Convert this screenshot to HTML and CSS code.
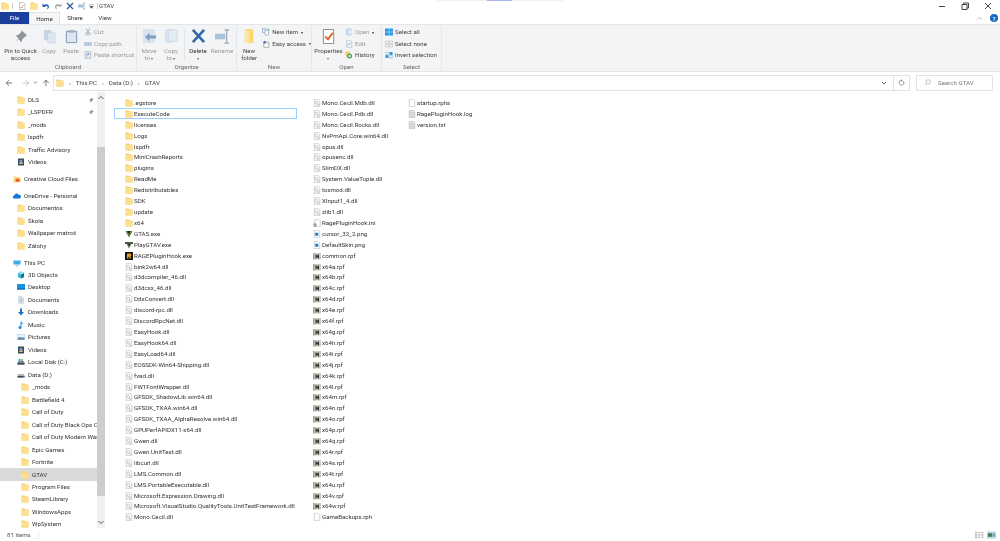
FILE: index.html
```html
<!DOCTYPE html>
<html lang="en">
<head>
<meta charset="utf-8">
<title>GTAV</title>
<link rel="stylesheet" href="styles.css">
</head>
<body>
<svg class="sprite" aria-hidden="true">
  <symbol id="folder" viewBox="0 0 16 16"><path d="M1 1h6l2 2h6v12H1z" fill="#f6cf6b"/><path d="M1 4h14v11H1z" fill="#fde08f"/></symbol>
  <symbol id="dll" viewBox="0 0 16 16"><path d="M2.500 .5h8l3 3v12h-11z" fill="#fff" stroke="#a5a5a5"/><circle cx="7" cy="7" r="2.600" fill="none" stroke="#a9b4be" stroke-width="1.400"/><circle cx="10" cy="11.500" r="1.800" fill="none" stroke="#a9b4be" stroke-width="1.200"/><path d="M4.500 12h2" stroke="#c3ccd4"/></symbol>
  <symbol id="page" viewBox="0 0 16 16"><path d="M2.500 .5h8l3 3v12h-11z" fill="#fff" stroke="#a5a5a5"/></symbol>
  <symbol id="log" viewBox="0 0 16 16"><path d="M2.500 .5h8l3 3v12h-11z" fill="#e4e4e4" stroke="#a5a5a5"/><path d="M4 5h8M4 7.500h8M4 10h8M4 12.500h8" stroke="#c6c6c6"/></symbol>
  <symbol id="ini" viewBox="0 0 16 16"><path d="M3.500 .5h8l3 3v12h-11z" fill="#fff" stroke="#a5a5a5"/><circle cx="4" cy="12" r="3.500" fill="#888"/><circle cx="4" cy="12" r="1.200" fill="#fff"/></symbol>
  <symbol id="png" viewBox="0 0 16 16"><path d="M2.500 .5h8l3 3v12h-11z" fill="#fff" stroke="#a5a5a5"/><path d="M4.500 5.500h6v6h-6z" fill="#1a78d0"/></symbol>
  <symbol id="rpf" viewBox="0 0 16 16"><path d="M0 2h16v13H0z" fill="#cfcabb"/><path d="M0 2h3v13H0z" fill="#a9a698"/><path d="M5 5h2l1.500 3L10 5h2v8h-2V9l-1.500 3L7 9v4H5z" fill="#2f2f2c"/></symbol>
  <symbol id="gta5" viewBox="0 0 16 16"><path d="M1 2h14L8 15z" fill="#5d7a3a"/><path d="M5 2h6L8 9z" fill="#23301c"/></symbol>
  <symbol id="play" viewBox="0 0 16 16"><path d="M0 2h16v4H0z" fill="#4a5a4a"/><path d="M3 6h10l-5 9z" fill="#6c7c5c"/><path d="M6 6h4l-2 5z" fill="#222"/></symbol>
  <symbol id="rage" viewBox="0 0 16 16"><rect width="16" height="16" rx="1" fill="#15120c"/><path d="M4 3h7l2 3-2 3 2 4h-3L8 9H7v4H4z" fill="#e0a020"/></symbol>
  <symbol id="pin" viewBox="0 0 16 16"><path d="M9 1l6 6-2 1-3 3-1 3-3-3-4 4 4-5-3-3 3-1 3-3z" fill="#8f9499"/></symbol>
  <symbol id="video" viewBox="0 0 16 16"><path d="M2 1h12v14H2z" fill="#3f4a58"/><path d="M5 4h6v8H5z" fill="#6f9bd8"/><path d="M5 9h6v3H5z" fill="#e5b75a"/></symbol>
  <symbol id="cc" viewBox="0 0 16 16"><path d="M1 3h6l1 1h7v11H1z" fill="#fbd67a"/><path d="M6 13a3 3 0 0 1 1-5 3 3 0 0 1 5 1 2 2 0 0 1 0 4z" fill="#e8532b"/></symbol>
  <symbol id="cloud" viewBox="0 0 16 16"><path d="M3 13a3 3 0 0 1-.500-6A4.500 4.500 0 0 1 11 5.500 3.800 3.800 0 0 1 13 13z" fill="#0f78d4"/></symbol>
  <symbol id="pc" viewBox="0 0 16 16"><path d="M1 2h14v9H1z" fill="#3fa7ea"/><path d="M1 2h14v2H1z" fill="#9dd5f5"/><path d="M5 13h6v1.500H5z" fill="#8a9aa8"/><path d="M7 11h2v2H7z" fill="#b8c4ce"/></symbol>
  <symbol id="cube" viewBox="0 0 16 16"><path d="M8 1l6 3v8l-6 3-6-3V4z" fill="#3ab2d8"/><path d="M8 7l6-3v8l-6 3z" fill="#12749e"/><path d="M2 4l6-3 6 3-6 3z" fill="#97e0f3"/></symbol>
  <symbol id="desk" viewBox="0 0 16 16"><path d="M0 2h16v11H0z" fill="#1a8fe3"/><path d="M0 11h16v2H0z" fill="#0c62aa"/></symbol>
  <symbol id="docs" viewBox="0 0 16 16"><path d="M3 1h7l3 3v11H3z" fill="#dfe6ec" stroke="#a8b4bf" stroke-width=".7"/><path d="M5 6h6M5 8.500h6M5 11h6" stroke="#70a7d6"/></symbol>
  <symbol id="down" viewBox="0 0 16 16"><path d="M6 1h4v7h4l-6 7-6-7h4z" fill="#1a73c9"/></symbol>
  <symbol id="music" viewBox="0 0 16 16"><path d="M7 1h2c0 3 4 3 4 7-1-2-2-2.500-4-3v8a3 3 0 1 1-2-2.800z" fill="#1f8fe0"/></symbol>
  <symbol id="pics" viewBox="0 0 16 16"><path d="M0 2h16v12H0z" fill="#b9c9d6"/><path d="M1 3h14v5H1z" fill="#eaf2f8"/><path d="M1 13l5-5 4 3 2-2 3 2v2z" fill="#4d7fa6"/></symbol>
  <symbol id="disk" viewBox="0 0 16 16"><path d="M1 9l2-3h10l2 3v4H1z" fill="#7b8790"/><path d="M1 10h14v3H1z" fill="#3d4750"/><path d="M3 2h4v4H3z" fill="#37a3e6"/><path d="M8 2h4v4H8z" fill="#79c857"/></symbol>
  <symbol id="drive" viewBox="0 0 16 16"><path d="M2 6h12l1 3v4H1V9z" fill="#adb4ba"/><path d="M1 10h14v3H1z" fill="#3d4750"/><path d="M12 11h2v1h-2z" fill="#79c857"/></symbol>
</svg>
<div class="window">
  <span class="topstrip"><span class="topstrip-on"></span></span>
  <header class="titlebar">
    <svg class="qa qa-first" viewBox="0 0 16 16"><use href="#folder"/></svg>
    <i class="qa-sep"></i>
    <svg class="qa" viewBox="0 0 16 16"><path d="M3 1h8l3 3v11H3z" fill="#fff" stroke="#888"/><path d="M5 10l2 2 4-5" stroke="#e0602a" fill="none" stroke-width="1.500"/></svg>
    <svg class="qa" viewBox="0 0 16 16"><use href="#folder"/></svg>
    <svg class="qa" viewBox="0 0 16 16"><path d="M4 6a6 6 0 0 1 10 3c0 3-2 5-5 6 2-2 3-4 2-6a4 4 0 0 0-5-1l2 2H1V3l3 3z" fill="#1f5fa8"/></svg>
    <svg class="qa" viewBox="0 0 16 16"><path d="M12 6a6 6 0 0 0-10 3c0 3 2 5 5 6-2-2-3-4-2-6a4 4 0 0 1 5-1L8 9h7V3l-3 3z" fill="#98a2ad"/></svg>
    <svg class="qa" viewBox="0 0 16 16"><path d="M2 2l12 12M14 2L2 14" stroke="#2c5f96" stroke-width="2.500"/></svg>
    <svg class="qa" viewBox="0 0 16 16"><path d="M0 5h11v6H0z" fill="#a7c0dc"/><path d="M12 2v12M10 2h4M10 14h4" stroke="#7e8b97"/></svg>
    <svg class="qa-caret" viewBox="0 0 8 8"><path d="M0 1h8M1 3.500h6L4 7z" fill="#444" stroke="#444" stroke-width=".5"/></svg>
    <i class="qa-sep qa-sep-b"></i>
    <span class="title">GTAV</span>
    <span class="winbtns">
      <svg class="winbtn" viewBox="0 0 10 10"><path d="M2 5.500h6" stroke="#444"/></svg>
      <svg class="winbtn" viewBox="0 0 10 10"><path d="M2 3.500h5v5H2zM3.500 3.500V2h5v5H7" fill="none" stroke="#444"/></svg>
      <svg class="winbtn" viewBox="0 0 10 10"><path d="M2 2l6 6M8 2l-6 6" stroke="#444"/></svg>
    </span>
  </header>
  <nav class="tabs">
    <span class="tab tab-file">File</span>
    <span class="tab tab-on">Home</span>
    <span class="tab">Share</span>
    <span class="tab">View</span>
    <svg class="collapse" viewBox="0 0 8 8"><path d="M1 5.500l3-3 3 3" fill="none" stroke="#b5b5b5"/></svg>
    <span class="help">?</span>
  </nav>
  <section class="ribbon">
    <div class="group g-clip">
      <div class="g-body">
        <div class="big big-pin">
          <svg class="big-ic" viewBox="0 0 16 16"><use href="#pin"/></svg>
          <span>Pin to Quick<br>access</span>
        </div>
        <div class="big big-off">
          <svg class="big-ic" viewBox="0 0 16 16"><path d="M2 1h8v11H2z" fill="#c6d5e6"/><path d="M6 4h8v11H6z" fill="#dce6f0" stroke="#bfcbd8" stroke-width=".5"/></svg>
          <span>Copy</span>
        </div>
        <div class="big big-off">
          <svg class="big-ic" viewBox="0 0 16 16"><path d="M2.500 2.500h11v12h-11z" fill="#dce6f0" stroke="#7b93ad"/><path d="M5 1h6v3H5z" fill="#a5b4c4"/></svg>
          <span>Paste</span>
        </div>
        <div class="smalls smalls-off">
          <div class="small"><svg class="sm-ic" viewBox="0 0 16 16"><path d="M4 1l6 9M12 1L6 10" stroke="#8e99a5" stroke-width="1.500"/><circle cx="5" cy="12" r="2.500" fill="none" stroke="#8e99a5"/><circle cx="11" cy="12" r="2.500" fill="none" stroke="#8e99a5"/></svg>Cut</div>
          <div class="small"><svg class="sm-ic" viewBox="0 0 16 16"><path d="M0 4h16v8H0z" fill="#c0d0e0"/><path d="M2 8h12" stroke="#7d93a8" stroke-dasharray="2 1"/></svg>Copy path</div>
          <div class="small"><svg class="sm-ic" viewBox="0 0 16 16"><path d="M2.500 1.500h11v13h-11z" fill="#e6ecf2" stroke="#8096ad"/><path d="M6 11V6h4M8 4.500L10 6 8 7.500" fill="none" stroke="#44689a"/></svg>Paste shortcut</div>
        </div>
      </div>
      <div class="g-label">Clipboard</div>
    </div>
    <div class="group g-org">
      <div class="g-body">
        <div class="big big-off">
          <svg class="big-ic" viewBox="0 0 16 16"><path d="M1 0h13v15H1z" fill="#d9e3ef"/><path d="M15 7v3H8v3L3 8.500 8 4v3z" fill="#7ea0c4"/></svg>
          <span>Move<br>to <em>▾</em></span>
        </div>
        <div class="big big-off">
          <svg class="big-ic" viewBox="0 0 16 16"><path d="M1 0h9v15H1z" fill="#d9e3ef"/><path d="M5 1h9v12H5z" fill="#e4ebf3" stroke="#bfcbd8" stroke-width=".5"/></svg>
          <span>Copy<br>to <em>▾</em></span>
        </div>
        <i class="r-sep"></i>
        <div class="big big-del">
          <svg class="big-ic" viewBox="0 0 16 16"><path d="M2 1l12 13M14 1L2 14" stroke="#2e6aa7" stroke-width="2.800"/></svg>
          <span>Delete<br><em>▾</em></span>
        </div>
        <div class="big big-off">
          <svg class="big-ic" viewBox="0 0 16 16"><path d="M0 5h11v6H0z" fill="#a8c3de"/><path d="M12.500 1v14M10 1h5M10 15h5" stroke="#8492a0"/></svg>
          <span>Rename</span>
        </div>
      </div>
      <div class="g-label">Organize</div>
    </div>
    <div class="group g-new">
      <div class="g-body">
        <div class="big">
          <svg class="big-ic" viewBox="0 0 16 16"><path d="M3 0h7l2 1v14H3z" fill="#f9d671"/><path d="M3 0l5 2v14l-5-2z" fill="#fbe5a2"/></svg>
          <span>New<br>folder</span>
        </div>
        <div class="smalls">
          <div class="small"><svg class="sm-ic" viewBox="0 0 16 16"><path d="M1 1h7v8H1z" fill="#dfe9f2" stroke="#6b8bab"/><path d="M6 5h7v9H6z" fill="#fff" stroke="#6b8bab"/><path d="M13 1v4M11 3h4" stroke="#3c9c48"/></svg>New item <em>▾</em></div>
          <div class="small"><svg class="sm-ic" viewBox="0 0 16 16"><path d="M3.500 4.500h10v10h-10z" fill="#fff" stroke="#666"/><path d="M7 1L2 5l5 3z" fill="#1f5fa8"/></svg>Easy access <em>▾</em></div>
        </div>
      </div>
      <div class="g-label">New</div>
    </div>
    <div class="group g-open">
      <div class="g-body">
        <div class="big">
          <svg class="big-ic" viewBox="0 0 16 16"><path d="M2.500 .5h11v15h-11z" fill="#fff" stroke="#888"/><path d="M4.500 8l3 3 5-7" fill="none" stroke="#e2622a" stroke-width="2"/></svg>
          <span>Properties<br><em>▾</em></span>
        </div>
        <div class="smalls">
          <div class="small small-off"><svg class="sm-ic" viewBox="0 0 16 16"><path d="M2 1h11v14H2z" fill="#c6d5e6"/><path d="M8 5h3v6H8z" fill="#fff"/></svg>Open <em>▾</em></div>
          <div class="small small-off"><svg class="sm-ic" viewBox="0 0 16 16"><path d="M3.500 .5h7l3 3v12h-10z" fill="#eef3f8" stroke="#93a9c0"/><path d="M5 12l6-7" stroke="#7d9cc0" stroke-width="1.500"/></svg>Edit</div>
          <div class="small"><svg class="sm-ic" viewBox="0 0 16 16"><path d="M1 1h9v10H1z" fill="#f5cf68"/><circle cx="9" cy="10" r="5" fill="#3f9f45"/><circle cx="9" cy="10" r="2.500" fill="#e5e5e5"/></svg>History</div>
        </div>
      </div>
      <div class="g-label">Open</div>
    </div>
    <div class="group g-sel">
      <div class="g-body">
        <div class="smalls smalls-sel">
          <div class="small"><svg class="sm-ic" viewBox="0 0 16 16"><path d="M0 1h16v14H0z" fill="#2d9be8"/><path d="M8 1v14M0 8h16" stroke="#cfe8fa"/></svg>Select all</div>
          <div class="small"><svg class="sm-ic" viewBox="0 0 16 16"><path d="M1 2h6v5H1zM9 2h6v5H9zM1 9h6v5H1zM9 9h6v5H9z" fill="#f2f2f2" stroke="#b5b5b5"/></svg>Select none</div>
          <div class="small"><svg class="sm-ic" viewBox="0 0 16 16"><path d="M1 8h6v6H1zM9 2h6v6H9z" fill="#2d9be8"/><path d="M1.500 2.500h6v5h-6zM9.500 9.500h5v5h-5z" fill="#f2f2f2" stroke="#7fa9c9"/></svg>Invert selection</div>
        </div>
      </div>
      <div class="g-label">Select</div>
    </div>
    <div class="ribbon-rest"></div>
  </section>
  <div class="navbar">
    <svg class="nav-ic" viewBox="0 0 10 10"><path d="M9 5H1.500M5 1.500L1.500 5 5 8.500" fill="none" stroke="#555"/></svg>
    <svg class="nav-ic nav-off" viewBox="0 0 10 10"><path d="M1 5h7.500M5 1.500L8.500 5 5 8.500" fill="none" stroke="#bbb"/></svg>
    <svg class="nav-caret" viewBox="0 0 6 6"><path d="M1 2l2 2 2-2" fill="none" stroke="#777"/></svg>
    <svg class="nav-ic nav-up" viewBox="0 0 10 10"><path d="M5 9V1.500M1.500 5L5 1.500 8.500 5" fill="none" stroke="#555"/></svg>
    <div class="address">
      <svg class="addr-folder" viewBox="0 0 16 16"><use href="#folder"/></svg>
      <span class="crumb-sep">›</span><span>This PC</span><span class="crumb-sep">›</span><span>Data (D:)</span><span class="crumb-sep">›</span><span>GTAV</span>
      <svg class="addr-caret" viewBox="0 0 6 6"><path d="M1 2l2 2 2-2" fill="none" stroke="#666"/></svg>
      <span class="addr-refresh"><svg viewBox="0 0 10 10"><path d="M7.500 3a3.400 3.400 0 1 1-2.500-1" fill="none" stroke="#666"/><path d="M4.500 .5v3l2-1.500z" fill="#666"/></svg></span>
    </div>
    <div class="search">
      <svg class="search-ic" viewBox="0 0 10 10"><circle cx="6" cy="4" r="3" fill="none" stroke="#aaa"/><path d="M4 6.500L1 9" stroke="#aaa"/></svg>
      <span>Search GTAV</span>
    </div>
  </div>
  <main class="main">
    <aside class="sidebar">
      <div class="tree">
        <div class="node l1"><svg class="ic"><use href="#folder"/></svg><span>DLS</span><svg class="tree-pin"><use href="#pin"/></svg></div>
        <div class="node l1"><svg class="ic"><use href="#folder"/></svg><span>_LSPDFR</span><svg class="tree-pin"><use href="#pin"/></svg></div>
        <div class="node l1"><svg class="ic"><use href="#folder"/></svg><span>_mods</span></div>
        <div class="node l1"><svg class="ic"><use href="#folder"/></svg><span>lspdfr</span></div>
        <div class="node l1"><svg class="ic"><use href="#folder"/></svg><span>Traffic Advisory</span></div>
        <div class="node l1"><svg class="ic"><use href="#video"/></svg><span>Videos</span></div>
        <div class="node l0 gap"><svg class="ic"><use href="#cc"/></svg><span>Creative Cloud Files</span></div>
        <div class="node l0 gap"><svg class="ic"><use href="#cloud"/></svg><span>OneDrive - Personal</span></div>
        <div class="node l1"><svg class="ic"><use href="#folder"/></svg><span>Documentos</span></div>
        <div class="node l1"><svg class="ic"><use href="#folder"/></svg><span>Škola</span></div>
        <div class="node l1"><svg class="ic"><use href="#folder"/></svg><span>Wallpaper matroš</span></div>
        <div class="node l1"><svg class="ic"><use href="#folder"/></svg><span>Zálohy</span></div>
        <div class="node l0 gap"><svg class="ic"><use href="#pc"/></svg><span>This PC</span></div>
        <div class="node l1"><svg class="ic"><use href="#cube"/></svg><span>3D Objects</span></div>
        <div class="node l1"><svg class="ic"><use href="#desk"/></svg><span>Desktop</span></div>
        <div class="node l1"><svg class="ic"><use href="#docs"/></svg><span>Documents</span></div>
        <div class="node l1"><svg class="ic"><use href="#down"/></svg><span>Downloads</span></div>
        <div class="node l1"><svg class="ic"><use href="#music"/></svg><span>Music</span></div>
        <div class="node l1"><svg class="ic"><use href="#pics"/></svg><span>Pictures</span></div>
        <div class="node l1"><svg class="ic"><use href="#video"/></svg><span>Videos</span></div>
        <div class="node l1"><svg class="ic"><use href="#disk"/></svg><span>Local Disk (C:)</span></div>
        <div class="node l1"><svg class="ic"><use href="#drive"/></svg><span>Data (D:)</span></div>
        <div class="node l2"><svg class="ic"><use href="#folder"/></svg><span>_mods</span></div>
        <div class="node l2"><svg class="ic"><use href="#folder"/></svg><span>Battlefield 4</span></div>
        <div class="node l2"><svg class="ic"><use href="#folder"/></svg><span>Call of Duty</span></div>
        <div class="node l2"><svg class="ic"><use href="#folder"/></svg><span>Call of Duty Black Ops Cold War</span></div>
        <div class="node l2"><svg class="ic"><use href="#folder"/></svg><span>Call of Duty Modern Warfare</span></div>
        <div class="node l2"><svg class="ic"><use href="#folder"/></svg><span>Epic Games</span></div>
        <div class="node l2"><svg class="ic"><use href="#folder"/></svg><span>Fortnite</span></div>
        <div class="node l2 node-on"><svg class="ic"><use href="#folder"/></svg><span>GTAV</span></div>
        <div class="node l2"><svg class="ic"><use href="#folder"/></svg><span>Program Files</span></div>
        <div class="node l2"><svg class="ic"><use href="#folder"/></svg><span>SteamLibrary</span></div>
        <div class="node l2"><svg class="ic"><use href="#folder"/></svg><span>WindowsApps</span></div>
        <div class="node l2"><svg class="ic"><use href="#folder"/></svg><span>WpSystem</span></div>
      </div>
      <div class="scrollbar">
        <svg class="sb-arrow" viewBox="0 0 8 8"><path d="M1.500 5L4 2.500 6.500 5" fill="none" stroke="#555"/></svg>
        <div class="sb-thumb"></div>
        <svg class="sb-arrow" viewBox="0 0 8 8"><path d="M1.500 3L4 5.500 6.500 3" fill="none" stroke="#555"/></svg>
      </div>
    </aside>
    <section class="files">
      <div class="col col-a">
        <div class="file"><svg class="ic"><use href="#folder"/></svg>.egstore</div>
        <div class="file file-focus"><svg class="ic"><use href="#folder"/></svg>ExecuteCode</div>
        <div class="file"><svg class="ic"><use href="#folder"/></svg>licenses</div>
        <div class="file"><svg class="ic"><use href="#folder"/></svg>Logs</div>
        <div class="file"><svg class="ic"><use href="#folder"/></svg>lspdfr</div>
        <div class="file"><svg class="ic"><use href="#folder"/></svg>MiniCrashReports</div>
        <div class="file"><svg class="ic"><use href="#folder"/></svg>plugins</div>
        <div class="file"><svg class="ic"><use href="#folder"/></svg>ReadMe</div>
        <div class="file"><svg class="ic"><use href="#folder"/></svg>Redistributables</div>
        <div class="file"><svg class="ic"><use href="#folder"/></svg>SDK</div>
        <div class="file"><svg class="ic"><use href="#folder"/></svg>update</div>
        <div class="file"><svg class="ic"><use href="#folder"/></svg>x64</div>
        <div class="file"><svg class="ic"><use href="#gta5"/></svg>GTA5.exe</div>
        <div class="file"><svg class="ic"><use href="#play"/></svg>PlayGTAV.exe</div>
        <div class="file"><svg class="ic"><use href="#rage"/></svg>RAGEPluginHook.exe</div>
        <div class="file"><svg class="ic"><use href="#dll"/></svg>bink2w64.dll</div>
        <div class="file"><svg class="ic"><use href="#dll"/></svg>d3dcompiler_46.dll</div>
        <div class="file"><svg class="ic"><use href="#dll"/></svg>d3dcsx_46.dll</div>
        <div class="file"><svg class="ic"><use href="#dll"/></svg>DdsConvert.dll</div>
        <div class="file"><svg class="ic"><use href="#dll"/></svg>discord-rpc.dll</div>
        <div class="file"><svg class="ic"><use href="#dll"/></svg>DiscordRpcNet.dll</div>
        <div class="file"><svg class="ic"><use href="#dll"/></svg>EasyHook.dll</div>
        <div class="file"><svg class="ic"><use href="#dll"/></svg>EasyHook64.dll</div>
        <div class="file"><svg class="ic"><use href="#dll"/></svg>EasyLoad64.dll</div>
        <div class="file"><svg class="ic"><use href="#dll"/></svg>EOSSDK-Win64-Shipping.dll</div>
        <div class="file"><svg class="ic"><use href="#dll"/></svg>fvad.dll</div>
        <div class="file"><svg class="ic"><use href="#dll"/></svg>FW1FontWrapper.dll</div>
        <div class="file"><svg class="ic"><use href="#dll"/></svg>GFSDK_ShadowLib.win64.dll</div>
        <div class="file"><svg class="ic"><use href="#dll"/></svg>GFSDK_TXAA.win64.dll</div>
        <div class="file"><svg class="ic"><use href="#dll"/></svg>GFSDK_TXAA_AlphaResolve.win64.dll</div>
        <div class="file"><svg class="ic"><use href="#dll"/></svg>GPUPerfAPIDX11-x64.dll</div>
        <div class="file"><svg class="ic"><use href="#dll"/></svg>Gwen.dll</div>
        <div class="file"><svg class="ic"><use href="#dll"/></svg>Gwen.UnitTest.dll</div>
        <div class="file"><svg class="ic"><use href="#dll"/></svg>libcurl.dll</div>
        <div class="file"><svg class="ic"><use href="#dll"/></svg>LMS.Common.dll</div>
        <div class="file"><svg class="ic"><use href="#dll"/></svg>LMS.PortableExecutable.dll</div>
        <div class="file"><svg class="ic"><use href="#dll"/></svg>Microsoft.Expression.Drawing.dll</div>
        <div class="file"><svg class="ic"><use href="#dll"/></svg>Microsoft.VisualStudio.QualityTools.UnitTestFramework.dll</div>
        <div class="file"><svg class="ic"><use href="#dll"/></svg>Mono.Cecil.dll</div>
      </div>
      <div class="col col-b">
        <div class="file"><svg class="ic"><use href="#dll"/></svg>Mono.Cecil.Mdb.dll</div>
        <div class="file"><svg class="ic"><use href="#dll"/></svg>Mono.Cecil.Pdb.dll</div>
        <div class="file"><svg class="ic"><use href="#dll"/></svg>Mono.Cecil.Rocks.dll</div>
        <div class="file"><svg class="ic"><use href="#dll"/></svg>NvPmApi.Core.win64.dll</div>
        <div class="file"><svg class="ic"><use href="#dll"/></svg>opus.dll</div>
        <div class="file"><svg class="ic"><use href="#dll"/></svg>opusenc.dll</div>
        <div class="file"><svg class="ic"><use href="#dll"/></svg>SlimDX.dll</div>
        <div class="file"><svg class="ic"><use href="#dll"/></svg>System.ValueTuple.dll</div>
        <div class="file"><svg class="ic"><use href="#dll"/></svg>toxmod.dll</div>
        <div class="file"><svg class="ic"><use href="#dll"/></svg>XInput1_4.dll</div>
        <div class="file"><svg class="ic"><use href="#dll"/></svg>zlib1.dll</div>
        <div class="file"><svg class="ic"><use href="#ini"/></svg>RagePluginHook.ini</div>
        <div class="file"><svg class="ic"><use href="#png"/></svg>cursor_32_2.png</div>
        <div class="file"><svg class="ic"><use href="#png"/></svg>DefaultSkin.png</div>
        <div class="file"><svg class="ic"><use href="#rpf"/></svg>common.rpf</div>
        <div class="file"><svg class="ic"><use href="#rpf"/></svg>x64a.rpf</div>
        <div class="file"><svg class="ic"><use href="#rpf"/></svg>x64b.rpf</div>
        <div class="file"><svg class="ic"><use href="#rpf"/></svg>x64c.rpf</div>
        <div class="file"><svg class="ic"><use href="#rpf"/></svg>x64d.rpf</div>
        <div class="file"><svg class="ic"><use href="#rpf"/></svg>x64e.rpf</div>
        <div class="file"><svg class="ic"><use href="#rpf"/></svg>x64f.rpf</div>
        <div class="file"><svg class="ic"><use href="#rpf"/></svg>x64g.rpf</div>
        <div class="file"><svg class="ic"><use href="#rpf"/></svg>x64h.rpf</div>
        <div class="file"><svg class="ic"><use href="#rpf"/></svg>x64i.rpf</div>
        <div class="file"><svg class="ic"><use href="#rpf"/></svg>x64j.rpf</div>
        <div class="file"><svg class="ic"><use href="#rpf"/></svg>x64k.rpf</div>
        <div class="file"><svg class="ic"><use href="#rpf"/></svg>x64l.rpf</div>
        <div class="file"><svg class="ic"><use href="#rpf"/></svg>x64m.rpf</div>
        <div class="file"><svg class="ic"><use href="#rpf"/></svg>x64n.rpf</div>
        <div class="file"><svg class="ic"><use href="#rpf"/></svg>x64o.rpf</div>
        <div class="file"><svg class="ic"><use href="#rpf"/></svg>x64p.rpf</div>
        <div class="file"><svg class="ic"><use href="#rpf"/></svg>x64q.rpf</div>
        <div class="file"><svg class="ic"><use href="#rpf"/></svg>x64r.rpf</div>
        <div class="file"><svg class="ic"><use href="#rpf"/></svg>x64s.rpf</div>
        <div class="file"><svg class="ic"><use href="#rpf"/></svg>x64t.rpf</div>
        <div class="file"><svg class="ic"><use href="#rpf"/></svg>x64u.rpf</div>
        <div class="file"><svg class="ic"><use href="#rpf"/></svg>x64v.rpf</div>
        <div class="file"><svg class="ic"><use href="#rpf"/></svg>x64w.rpf</div>
        <div class="file"><svg class="ic"><use href="#page"/></svg>GameBackups.rph</div>
      </div>
      <div class="col col-c">
        <div class="file"><svg class="ic"><use href="#page"/></svg>startup.rphs</div>
        <div class="file"><svg class="ic"><use href="#log"/></svg>RagePluginHook.log</div>
        <div class="file"><svg class="ic"><use href="#log"/></svg>version.txt</div>
      </div>
    </section>
  </main>
  <footer class="status">
    <span class="count">81 items</span>
    <i class="status-sep"></i>
    <span class="views">
      <svg class="view" viewBox="0 0 10 8"><path d="M0 0h2.500v8H0z" fill="#ccc"/><path d="M3.500 1.500h2.500M7 1.500h2.500M3.500 4h2.500M7 4h2.500M3.500 6.500h2.500M7 6.500h2.500" stroke="#999"/></svg>
      <svg class="view view-on" viewBox="0 0 10 8"><path d="M0 0h10v8H0z" fill="#bcdcf4"/><path d="M1 2h5v4H1z" fill="#497a5c"/><path d="M7 3h2M7 5h2" stroke="#555"/></svg>
    </span>
  </footer>
</div>
</body>
</html>
```
FILE: styles.css
```css
* { box-sizing: border-box; }
html, body { margin: 0; padding: 0; height: 100%; background: #fff; overflow: hidden; }
body { font-family: Roboto, "Liberation Sans", sans-serif; font-size: 6.15px; color: #333; }
svg { display: block; flex: none; }
em { font-style: normal; font-size: 4px; color: #666; }
.sprite { width: 0; height: 0; position: absolute; }
.window { display: flex; flex-direction: column; width: 1000px; height: 541px; position: relative; filter: blur(.3px); }
.topstrip { position: absolute; left: 437px; top: 0; width: 126px; height: 1px; background: #f0f0f0; }
.topstrip-on { display: block; margin-left: 50px; width: 25px; height: 1px; background: #a9b5ea; }

.titlebar { height: 12px; display: flex; align-items: center; padding-left: 1px; flex: none; }
.qa { width: 8px; height: 8px; margin-right: 4px; }
.qa-first { margin-right: 3px; }
.qa-sep { width: 1px; height: 6px; background: #ccc; margin-right: 5px; }
.qa-caret { width: 5px; height: 5px; margin-left: -1px; }
.qa-sep-b { margin-left: 3px; margin-right: 1px; }
.title { color: #444; }
.winbtns { margin-left: auto; display: flex; gap: 13px; padding-right: 7px; }
.winbtn { width: 10px; height: 10px; }

.tabs { height: 12px; display: flex; align-items: stretch; flex: none; position: relative; }
.tab { width: 30px; display: flex; align-items: center; justify-content: center; }
.tab-file { width: 29px; background: #1c3f9e; color: #fff; }
.tab-on { width: 31px; background: #f5f6f7; border: 1px solid #e2e3e4; border-bottom: 0; }
.collapse { width: 7px; height: 7px; margin-left: auto; align-self: center; margin-right: 7px; }
.help { width: 8px; height: 8px; border-radius: 50%; background: #0f6cc4; color: #fff; font-size: 6px; font-weight: 700; display: flex; align-items: center; justify-content: center; align-self: center; margin-right: 2px; }

.ribbon { height: 48px; background: #f3f4f6; border-top: 1px solid #e5e6e7; border-bottom: 1px solid #e3e4e5; display: flex; flex: none; color: #444; }
.group { display: flex; flex-direction: column; border-right: 1px solid #e6e7e8; }
.g-clip { width: 137px; }
.g-org { width: 100px; }
.g-new { width: 75px; }
.g-open { width: 70px; }
.g-sel { width: 60px; }
.ribbon-rest { flex: 1; }
.g-body { flex: 1; display: flex; padding-top: 4px; min-height: 0; }
.g-label { height: 9px; line-height: 10px; text-align: center; color: #666; flex: none; }
.big { display: flex; flex-direction: column; align-items: center; text-align: center; line-height: 7px; padding: 0 3px; }
.big span { margin-top: 4px; }
.big-ic { width: 15px; height: 15px; }
.big-off { color: #999; }
.big-pin { width: 37px; margin-left: 2px; padding: 0; }
.big-off, .big-del { width: 22px; padding: 0; }
.g-clip .big-off { width: 22px; }
.g-clip .big-pin + .big-off { margin-left: -1px; }
.g-org .g-body { padding-left: 1px; }
.big-del { width: 26px; color: #333; }
.r-sep { width: 1px; height: 32px; background: #e2e3e4; margin: 0 0 0 2px; }
.smalls { display: flex; flex-direction: column; gap: 0; padding-left: 3px; white-space: nowrap; margin-top: -2.500px; }
.small { display: flex; align-items: center; gap: 2px; height: 11.500px; }
.small em { margin-left: 1px; color: #333; }
.sm-ic { width: 8px; height: 8px; }
.smalls-off, .small-off { color: #999; }
.smalls-off { margin-left: -1px; }
.g-new .big { width: 29px; padding: 0; margin-left: -1px; }
.g-new .smalls { padding-left: 0; }
.g-open .g-body { padding-left: 2px; }
.g-open .big { width: 29px; padding: 0; }
.g-open .smalls { padding-left: 2px; }
.g-sel .smalls { padding-left: 3px; }

.navbar { height: 20px; display: flex; align-items: center; flex: none; padding: 1px 7px 0 5px; }
.nav-ic { width: 8px; height: 8px; margin-right: 9px; }
.nav-off { margin-right: 3px; }
.nav-caret { width: 5px; height: 5px; margin-right: 4px; }
.nav-up { margin-right: 3px; }
.address { flex: 1; height: 16px; border: 1px solid #e3e3e3; display: flex; align-items: center; padding-left: 2px; gap: 5px; color: #444; }
.addr-folder { width: 8px; height: 8px; }
.crumb-sep { color: #777; }
.addr-caret { width: 6px; height: 6px; margin-left: auto; margin-right: 1px; }
.addr-refresh { width: 16px; height: 100%; border-left: 1px solid #e3e3e3; display: flex; align-items: center; justify-content: center; }
.addr-refresh svg { width: 7px; height: 7px; }
.search { width: 77px; height: 16px; margin-left: 6px; border: 1px solid #e3e3e3; display: flex; align-items: center; padding-left: 7px; gap: 7px; color: #777; }
.search-ic { width: 7px; height: 7px; }

.main { flex: 1; min-height: 0; display: flex; }
.sidebar { width: 105px; display: flex; flex: none; }
.tree { width: 97px; overflow: hidden; padding-top: 1.500px; }
.node { height: 12.480px; display: flex; align-items: center; white-space: nowrap; overflow: hidden; position: relative; }
.node .ic { margin-right: 3px; }
.l0 { padding-left: 13px; }
.l0 .ic { width: 8px; margin-right: 3px; }
.l1 { padding-left: 17px; }
.l2 { padding-left: 21px; }
.gap { margin-top: 4.400px; }
.node-on { background: #d9d9d9; }
.tree-pin { width: 6px; height: 6px; position: absolute; left: 88px; top: 3px; }
.ic { width: 8px; height: 8px; margin-right: 1px; }
.scrollbar { width: 8px; background: #f0f0f0; display: flex; flex-direction: column; }
.sb-arrow { width: 8px; height: 8px; margin: 2px 0; }
.sb-thumb { height: 352px; background: #cdcdcd; margin: 43px 0 20px; }

.files { flex: 1; display: flex; padding: 5.500px 0 0 9px; align-items: flex-start; }
.col { display: flex; flex-direction: column; flex: none; }
.col-a { width: 188px; }
.col-b { width: 95px; }
.file { height: 10.920px; display: flex; align-items: center; padding-left: 11px; white-space: nowrap; }
.col-a .file { width: 183px; }
.file-focus { outline: 1px solid #99d1ff; outline-offset: -1px; }

.status { height: 13px; display: flex; align-items: center; padding-left: 7px; flex: none; color: #555; }
.status-sep { width: 1px; height: 8px; background: #eee; margin-left: 7px; }
.views { display: flex; margin-left: auto; gap: 3px; padding-right: 4px; }
.view { width: 9px; height: 8px; }
```
